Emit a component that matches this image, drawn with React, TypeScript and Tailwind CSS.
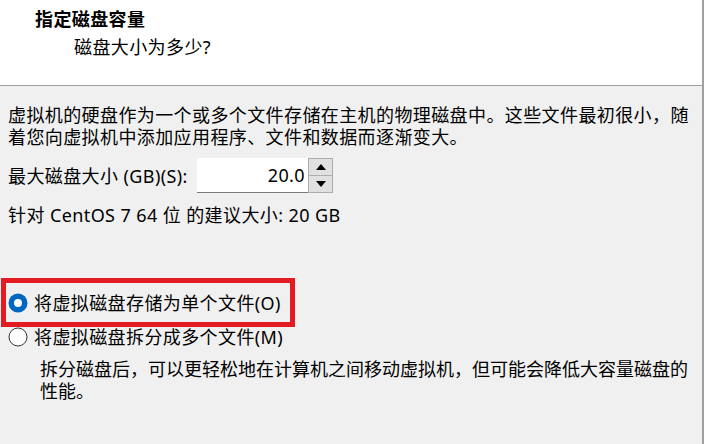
import React from "react";

const font = { fontFamily: '"Noto Sans", "Noto Sans CJK SC", sans-serif' };

function Radio({ checked }: { checked: boolean }) {
  return (
    <svg width="20" height="20" viewBox="0 0 20 20" className="shrink-0">
      {checked ? (
        <>
          <circle cx="10" cy="10" r="9.5" fill="#0067c0" />
          <circle cx="10" cy="10" r="4" fill="#ffffff" />
        </>
      ) : (
        <circle cx="10" cy="10" r="9" fill="#ffffff" stroke="#333333" strokeWidth="1" />
      )}
    </svg>
  );
}

export default function App() {
  return (
    <div
      className="relative w-[704px] h-[444px] overflow-hidden flex flex-col bg-[#f0f0f0] border-r-2 border-[#a0a0a0] text-black text-[18px] leading-[22px] tracking-[0.4px]"
      style={font}
    >
      <div className="h-[86px] shrink-0 bg-white border-b border-[#a0a0a0] pt-[8px]">
        <div className="pl-[35px] font-bold whitespace-nowrap">指定磁盘容量</div>
        <div className="pl-[74px] mt-[6px] whitespace-nowrap">磁盘大小为多少?</div>
      </div>

      <div className="flex flex-col pt-[18px]">
        <div className="pl-[8px] whitespace-nowrap">
          虚拟机的硬盘作为一个或多个文件存储在主机的物理磁盘中。这些文件最初很小，随
        </div>
        <div className="pl-[8px] whitespace-nowrap">着您向虚拟机中添加应用程序、文件和数据而逐渐变大。</div>

        <div className="flex items-center mt-[10px] h-[35px] pl-[8px]">
          <div className="w-[189px] whitespace-nowrap">最大磁盘大小 (GB)(S):</div>
          <div className="w-[111px] h-[35px] bg-white border-b border-[#7a7a7a] flex items-center justify-end pr-[3px]">
            20.0
          </div>
          <div className="w-[25px] h-[35px] flex flex-col border border-[#adadad] bg-[#e1e1e1]">
            <div className="flex-1 flex items-center justify-center border-b border-[#adadad]">
              <svg width="10" height="6" viewBox="0 0 10 6">
                <polygon points="5,0 10,6 0,6" fill="#000" />
              </svg>
            </div>
            <div className="flex-1 flex items-center justify-center">
              <svg width="10" height="6" viewBox="0 0 10 6">
                <polygon points="0,0 10,0 5,6" fill="#000" />
              </svg>
            </div>
          </div>
        </div>

        <div className="pl-[8px] mt-[11px] whitespace-nowrap">针对 CentOS 7 64 位 的建议大小: 20 GB</div>

        <div className="flex items-center gap-[6px] pl-[8px] mt-[66px] h-[22px]">
          <Radio checked />
          <span className="whitespace-nowrap">将虚拟磁盘存储为单个文件(O)</span>
        </div>
        <div className="flex items-center gap-[6px] pl-[8px] mt-[12px] h-[22px]">
          <Radio checked={false} />
          <span className="whitespace-nowrap">将虚拟磁盘拆分成多个文件(M)</span>
        </div>

        <div className="pl-[40px] mt-[10px] whitespace-nowrap tracking-[0px]">
          拆分磁盘后，可以更轻松地在计算机之间移动虚拟机，但可能会降低大容量磁盘的
        </div>
        <div className="pl-[40px] whitespace-nowrap tracking-[0px]">性能。</div>
      </div>

      <div className="absolute left-[1px] top-[278px] w-[294px] h-[49px] border-[5px] border-[#e31b23] pointer-events-none" />
    </div>
  );
}
